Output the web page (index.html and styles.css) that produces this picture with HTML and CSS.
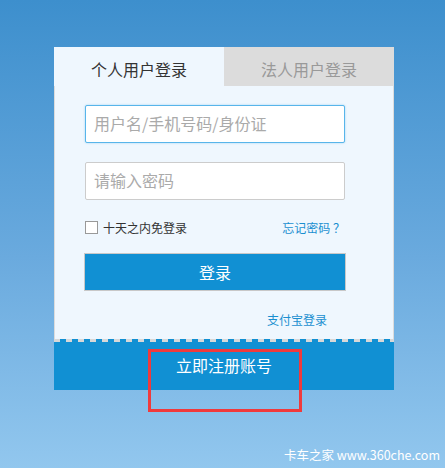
FILE: index.html
```html
<!DOCTYPE html>
<html lang="zh-CN">
<head>
<meta charset="utf-8">
<link rel="stylesheet" href="styles.css">
</head>
<body>
<div class="page">
  <div class="card">
    <div class="tabs">
      <div class="tab active">个人用户登录</div>
      <div class="tab">法人用户登录</div>
    </div>
    <div class="panel">
      <div class="field focus">用户名/手机号码/身份证</div>
      <div class="field">请输入密码</div>
      <div class="row">
        <label class="remember"><span class="box"></span>十天之内免登录</label>
        <a class="link">忘记密码 ？</a>
      </div>
      <div class="btn">登录</div>
      <div class="alipay"><a class="link">支付宝登录</a></div>
    </div>
    <div class="dash"></div>
    <div class="register">立即注册账号</div>
    <div class="highlight"></div>
  </div>
  <div class="mark">卡车之家 www.360che.com</div>
</div>
</body>
</html>
```
FILE: styles.css
```css
html, body { margin: 0; padding: 0; }
body {
  width: 445px;
  height: 468px;
  overflow: hidden;
  font-family: "Noto Sans CJK SC", "Liberation Sans", sans-serif;
  background: linear-gradient(to bottom, #3d8fcd 0%, #6aaade 55%, #92c7ee 100%);
}
.page {
  position: relative;
  height: 468px;
  padding: 47px 0 0 54px;
  box-sizing: border-box;
}
.card {
  position: relative;
  width: 340px;
}
.tabs {
  display: flex;
  height: 39px;
}
.tab {
  flex: 1;
  display: flex;
  align-items: center;
  justify-content: center;
  font-size: 16px;
  color: #999;
  background: #dcdcdc;
  padding-top: 4px;
  box-sizing: border-box;
}
.tab.active {
  color: #333;
  background: #eff7fe;
}
.panel {
  background: #eff7fe;
  border-left: 1px solid #dcdcdc;
  border-right: 1px solid #dcdcdc;
  padding: 19px 48px 0 30px;
  height: 253px;
  box-sizing: border-box;
}
.field {
  height: 38px;
  box-sizing: border-box;
  border: 1px solid #cccccc;
  border-radius: 2px;
  background: #fff;
  font-size: 16px;
  color: #aaa;
  padding-left: 8px;
  padding-bottom: 3px;
  display: flex;
  align-items: center;
  margin-bottom: 19px;
}
.field.focus {
  border-color: #58b5ea;
  box-shadow: 0 0 2px rgba(88,181,234,0.6);
}
.row {
  display: flex;
  justify-content: space-between;
  align-items: center;
  font-size: 12px;
  height: 16px;
  margin-top: 1px;
  padding-right: 0;
}
.remember {
  display: flex;
  align-items: center;
  color: #333;
}
.box {
  width: 11px;
  height: 11px;
  border: 1px solid #999;
  background: #fff;
  margin-right: 5px;
}
.link {
  color: #1a8fd0;
  font-size: 12px;
}
.btn {
  margin-top: 18px;
  height: 38px;
  box-sizing: border-box;
  border: 1px solid #c8c8c8;
  background: #1190d3;
  color: #fff;
  font-size: 16px;
  display: flex;
  align-items: center;
  justify-content: center;
  margin-right: -1px;
  margin-left: -1px;
}
.alipay {
  text-align: right;
  margin-top: 19px;
  padding-right: 18px;
  line-height: 16px;
}
.dash {
  height: 3px;
  background: #1190d3 repeating-linear-gradient(to right, #d8d8d8 0 6px, #1190d3 6px 12px);
}
.register {
  height: 48px;
  background: #1190d3;
  color: #fff;
  font-size: 16px;
  display: flex;
  align-items: center;
  justify-content: center;
  padding-bottom: 2px;
  box-sizing: border-box;
}
.highlight {
  position: absolute;
  left: 94px;
  top: 302px;
  width: 154px;
  height: 63px;
  box-sizing: border-box;
  border: 3px solid #f03a3c;
}
.mark {
  position: absolute;
  right: 5px;
  bottom: 4px;
  color: #fff;
  font-size: 12.5px;
  font-family: "Noto Sans CJK SC", "Open Sans", sans-serif;
}
```
